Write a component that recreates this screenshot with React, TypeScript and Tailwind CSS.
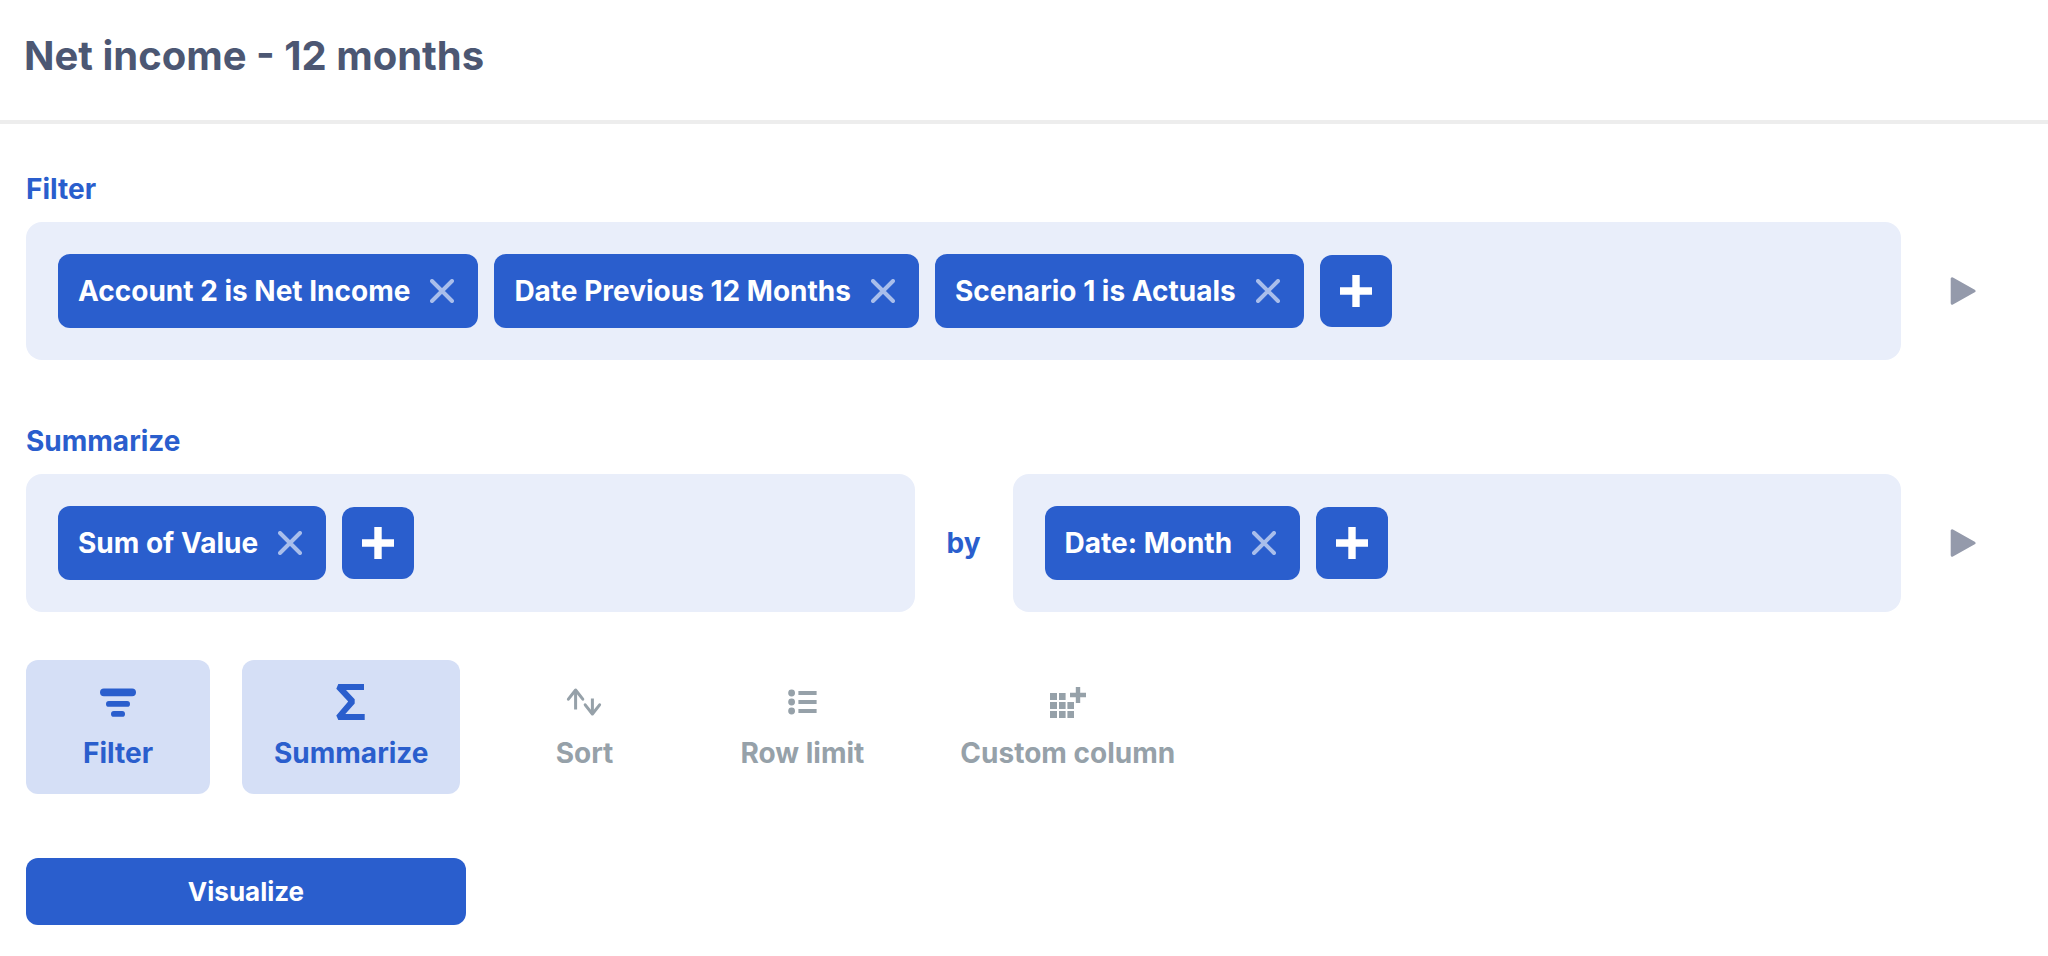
import type { ReactNode } from "react"

function CloseIcon() {
  return (
    <svg viewBox="0 0 24 24" className="h-6 w-6" fill="none" stroke="currentColor" strokeWidth="4" strokeLinecap="round">
      <path d="M2 2l20 20M22 2L2 22" />
    </svg>
  )
}

function PlusIcon() {
  return (
    <svg viewBox="0 0 32 32" className="h-8 w-8" fill="currentColor">
      <path d="M12.3 0h7.4v12.3H32v7.4H19.7V32h-7.4V19.7H0v-7.4h12.3z" />
    </svg>
  )
}

function PlayIcon() {
  return (
    <svg
      viewBox="0 0 28 28"
      className="h-7 w-7"
      fill="currentColor"
      stroke="currentColor"
      strokeWidth="3"
      strokeLinejoin="round"
    >
      <path d="M3.2 1.7v24.6L25 14z" />
    </svg>
  )
}

function FilterIcon() {
  return (
    <svg viewBox="0 0 36 36" className="h-9 w-9" fill="currentColor">
      <rect x="0" y="4.4" width="36" height="7.8" rx="3.9" />
      <rect x="6" y="17" width="24" height="5.8" rx="2.9" />
      <rect x="11" y="27" width="14" height="5.8" rx="2.9" />
    </svg>
  )
}

function SumIcon() {
  return (
    <svg viewBox="0 0 36 36" className="h-9 w-9" fill="currentColor">
      <path d="M5.3 0H31v6H13l8.7 9.3v4.2L12.3 30h19.4v6H5.3l-2-4.6L15.2 17.5 3.3 4.8z" />
    </svg>
  )
}

function SortIcon() {
  return (
    <svg
      viewBox="0 0 36 36"
      className="h-9 w-9"
      fill="none"
      stroke="currentColor"
      strokeWidth="3"
      strokeLinecap="round"
      strokeLinejoin="round"
    >
      <path d="M2.4 15.2L9.6 6l7.2 9.2M19.2 20.8l7.2 9.2 7.2-9.2" />
      <path strokeLinecap="butt" d="M9.6 6v19.6M26.4 30V14.4" />
    </svg>
  )
}

function ListIcon() {
  return (
    <svg viewBox="0 0 36 36" className="h-9 w-9" fill="currentColor">
      <circle cx="7.6" cy="9" r="3.4" />
      <circle cx="7.6" cy="18" r="3.4" />
      <circle cx="7.6" cy="27" r="3.4" />
      <path d="M14.4 6.9h18.2v4.2H14.4zM14.4 15.9h18.2v4.2H14.4zM14.4 24.9h18.2v4.2H14.4z" />
    </svg>
  )
}

function AddColumnIcon() {
  return (
    <svg viewBox="0 0 36 36" className="h-9 w-9" fill="currentColor">
      <path d="M0 9h7v7H0zM9 9h6.6v7H9zM0 18h7v7H0zM9 18h6.6v7H9zM17.4 18H24v7h-6.6zM0 27h7v7H0zM9 27h6.6v7H9zM17.4 27H24v7h-6.6z" />
      <path d="M25.8 3h4.4v5.8H36v4.4h-5.8V19h-4.4v-5.8H20V8.8h5.8z" />
    </svg>
  )
}

function Clause({ label }: { label: string }) {
  return (
    <div className="flex items-center gap-5 rounded-xl bg-[#2a5ecd] py-5 pr-6 pl-5 text-white">
      <button className="whitespace-nowrap">{label}</button>
      <button aria-label={`Remove ${label}`} className="text-[#a9beeb]">
        <CloseIcon />
      </button>
    </div>
  )
}

function ClausePanel({ items, addLabel }: { items: string[]; addLabel: string }) {
  return (
    <div className="flex min-w-0 flex-1 flex-wrap items-center gap-4 rounded-2xl bg-[#e9eefa] p-8">
      {items.map((item) => (
        <Clause key={item} label={item} />
      ))}
      <button
        aria-label={addLabel}
        className="flex h-18 w-18 items-center justify-center rounded-xl bg-[#2a5ecd] text-white"
      >
        <PlusIcon />
      </button>
    </div>
  )
}

function Step({ title, children }: { title: string; children: ReactNode }) {
  return (
    <section>
      <h2 className="mb-4 text-[#2a5ecd]">{title}</h2>
      <div className="flex items-center gap-12">
        <div className="flex min-w-0 flex-1 items-center gap-8">{children}</div>
        <button aria-label={`Preview ${title}`} className="text-[#949aab]">
          <PlayIcon />
        </button>
      </div>
    </section>
  )
}

const actions = [
  { label: "Filter", icon: <FilterIcon />, active: true },
  { label: "Summarize", icon: <SumIcon />, active: true },
  { label: "Sort", icon: <SortIcon />, active: false },
  { label: "Row limit", icon: <ListIcon />, active: false },
  { label: "Custom column", icon: <AddColumnIcon />, active: false },
]

export default function App() {
  return (
    <div className="min-h-screen bg-white font-['Inter',sans-serif] font-bold">
      <header className="border-b-4 border-[#ededed] px-6 pt-8 pb-10">
        <h1 className="text-[40px] leading-12 text-[#4c5773]">Net income - 12 months</h1>
      </header>

      <main className="pt-12 pr-[71px] pb-8 pl-[26px] text-[28px] leading-[34px]">
        <div className="flex flex-col gap-16">
          <Step title="Filter">
            <ClausePanel
              items={["Account 2 is Net Income", "Date Previous 12 Months", "Scenario 1 is Actuals"]}
              addLabel="Add filter"
            />
          </Step>
          <Step title="Summarize">
            <ClausePanel items={["Sum of Value"]} addLabel="Add metric" />
            <span className="text-[#2a5ecd]">by</span>
            <ClausePanel items={["Date: Month"]} addLabel="Add grouping" />
          </Step>
        </div>

        <div className="mt-12 flex flex-wrap gap-8">
          {actions.map(({ label, icon, active }) => (
            <button
              key={label}
              className={`flex min-w-46 flex-col items-center gap-4 rounded-xl px-8 py-6 ${
                active ? "bg-[#d5dff6] text-[#2a5ecd]" : "text-[#96a1a9]"
              }`}
            >
              {icon}
              {label}
            </button>
          ))}
        </div>

        <button className="mt-16 w-110 rounded-xl bg-[#2a5ecd] py-[18px] text-[26px] leading-[31px] text-white">
          Visualize
        </button>
      </main>
    </div>
  )
}
